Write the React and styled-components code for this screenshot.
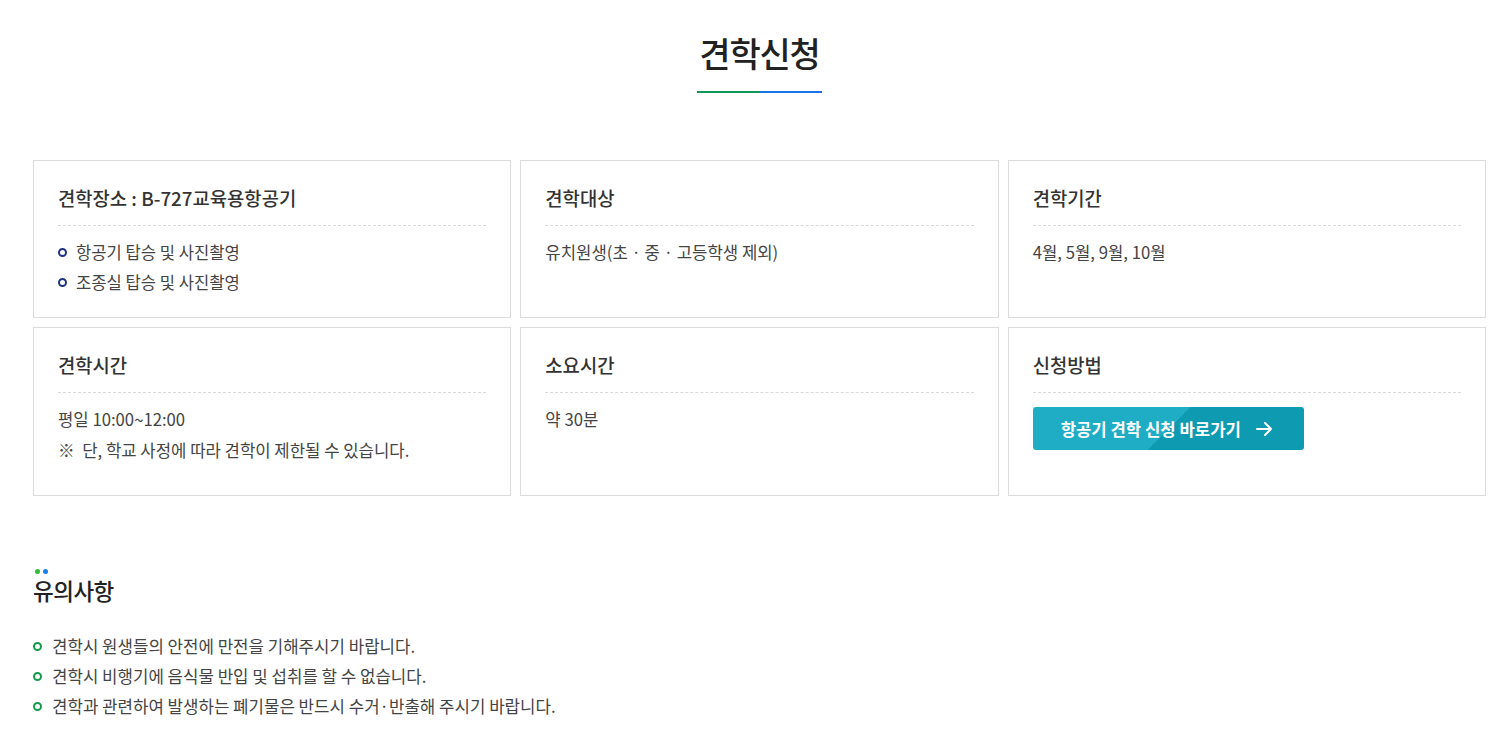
import React from 'react';
import styled, { createGlobalStyle } from 'styled-components';

const GlobalStyle = createGlobalStyle`
    html, body {
        margin: 0;
        padding: 0;
        background: #fff;
    }
    body {
        font-family: "Noto Sans CJK KR", "Noto Sans", sans-serif;
        color: #333;
    }
    *, *::before, *::after {
        box-sizing: border-box;
    }
`;

const cards = [
    {
        title: '견학장소 : B-727교육용항공기',
        bullets: ['항공기 탑승 및 사진촬영', '조종실 탑승 및 사진촬영'],
    },
    { title: '견학대상', lines: ['유치원생(초 · 중 · 고등학생 제외)'] },
    { title: '견학기간', lines: ['4월, 5월, 9월, 10월'] },
    {
        title: '견학시간',
        lines: ['평일 10:00~12:00', '※  단, 학교 사정에 따라 견학이 제한될 수 있습니다.'],
    },
    { title: '소요시간', lines: ['약 30분'] },
    { title: '신청방법', button: '항공기 견학 신청 바로가기' },
];

const notices = [
    '견학시 원생들의 안전에 만전을 기해주시기 바랍니다.',
    '견학시 비행기에 음식물 반입 및 섭취를 할 수 없습니다.',
    '견학과 관련하여 발생하는 폐기물은 반드시 수거·반출해 주시기 바랍니다.',
];

function ArrowIcon() {
    return (
        <svg width="17" height="14" viewBox="0 0 17 14" fill="none">
            <path d="M1 7h14M9 1l6 6-6 6" stroke="#fff" strokeWidth="2" strokeLinecap="round" strokeLinejoin="round" />
        </svg>
    );
}

export default function App() {
    return (
        <Page>
            <GlobalStyle />
            <Header>
                <Title>견학신청</Title>
                <TitleLine />
            </Header>

            <CardGrid>
                {cards.map((card) => (
                    <Card key={card.title}>
                        <CardTitle>{card.title}</CardTitle>
                        <CardBody>
                            {card.bullets && (
                                <List>
                                    {card.bullets.map((b) => (
                                        <ListItem key={b} color="#1d3282" gap={9} size={16.6}>{b}</ListItem>
                                    ))}
                                </List>
                            )}
                            {card.lines && card.lines.map((l) => <Line key={l}>{l}</Line>)}
                            {card.button && (
                                <ApplyButton href="#">
                                    {card.button}
                                    <ArrowIcon />
                                </ApplyButton>
                            )}
                        </CardBody>
                    </Card>
                ))}
            </CardGrid>

            <Notice>
                <Dots>
                    <Dot color="#2bbf3b" />
                    <Dot color="#1a7ff0" />
                </Dots>
                <NoticeTitle>유의사항</NoticeTitle>
                <List>
                    {notices.map((n) => (
                        <ListItem key={n} color="#159a4c" gap={10} size={16.8}>{n}</ListItem>
                    ))}
                </List>
            </Notice>
        </Page>
    );
}

const Page = styled.div`
    width: 1486px;
    padding: 30px 0 20px 33px;
`;

const Header = styled.div`
    display: flex;
    flex-direction: column;
    align-items: center;
`;

const Title = styled.h2`
    margin: 0;
    font-size: 34px;
    line-height: 45px;
    font-weight: 500;
    letter-spacing: -1.2px;
    color: #222;
`;

const TitleLine = styled.div`
    width: 125px;
    height: 2px;
    margin-top: 16px;
    background: linear-gradient(90deg, #12995a 50%, #1a74e6 50%);
`;

const CardGrid = styled.div`
    display: grid;
    grid-template-columns: repeat(3, 1fr);
    grid-template-rows: 158px 169px;
    gap: 9px;
    margin-top: 67px;
`;

const Card = styled.div`
    border: 1px solid #dcdcdc;
    padding: 24px 24px 20px;
`;

const CardTitle = styled.h3`
    margin: 0;
    padding-bottom: 14px;
    border-bottom: 1px dashed #d9d9d9;
    font-size: 18.8px;
    line-height: 26px;
    font-weight: 500;
    color: #333;
`;

const CardBody = styled.div`
    padding-top: 11px;
`;

const Line = styled.p`
    margin: 0;
    font-size: 16.7px;
    line-height: 31px;
    color: #444;
    white-space: pre;
`;

const List = styled.ul`
    margin: 0;
    padding: 0;
    list-style: none;
`;

const ListItem = styled.li`
    display: flex;
    align-items: center;
    gap: ${(p) => p.gap}px;
    font-size: ${(p) => p.size}px;
    line-height: 30px;
    color: #444;

    &::before {
        content: '';
        width: 9px;
        height: 9px;
        border: 2px solid ${(p) => p.color};
        border-radius: 50%;
        flex-shrink: 0;
    }
`;

const ApplyButton = styled.a`
    display: inline-flex;
    align-items: center;
    gap: 15px;
    height: 43px;
    width: 271px;
    margin-top: 3px;
    padding-left: 28px;
    border-radius: 3px;
    background: linear-gradient(135deg, #1fadc6 50%, #0e9bb1 50%);
    color: #fff;
    font-size: 16.7px;
    font-weight: 700;
    text-decoration: none;
`;

const Notice = styled.div`
    margin-top: 73px;
`;

const Dots = styled.div`
    display: flex;
    gap: 3px;
    padding-left: 2px;
`;

const Dot = styled.span`
    width: 5px;
    height: 5px;
    border-radius: 50%;
    background: ${(p) => p.color};
`;

const NoticeTitle = styled.h3`
    margin: 0 0 25px;
    font-size: 22.5px;
    line-height: 32px;
    font-weight: 500;
    color: #222;
    letter-spacing: -0.5px;
`;
